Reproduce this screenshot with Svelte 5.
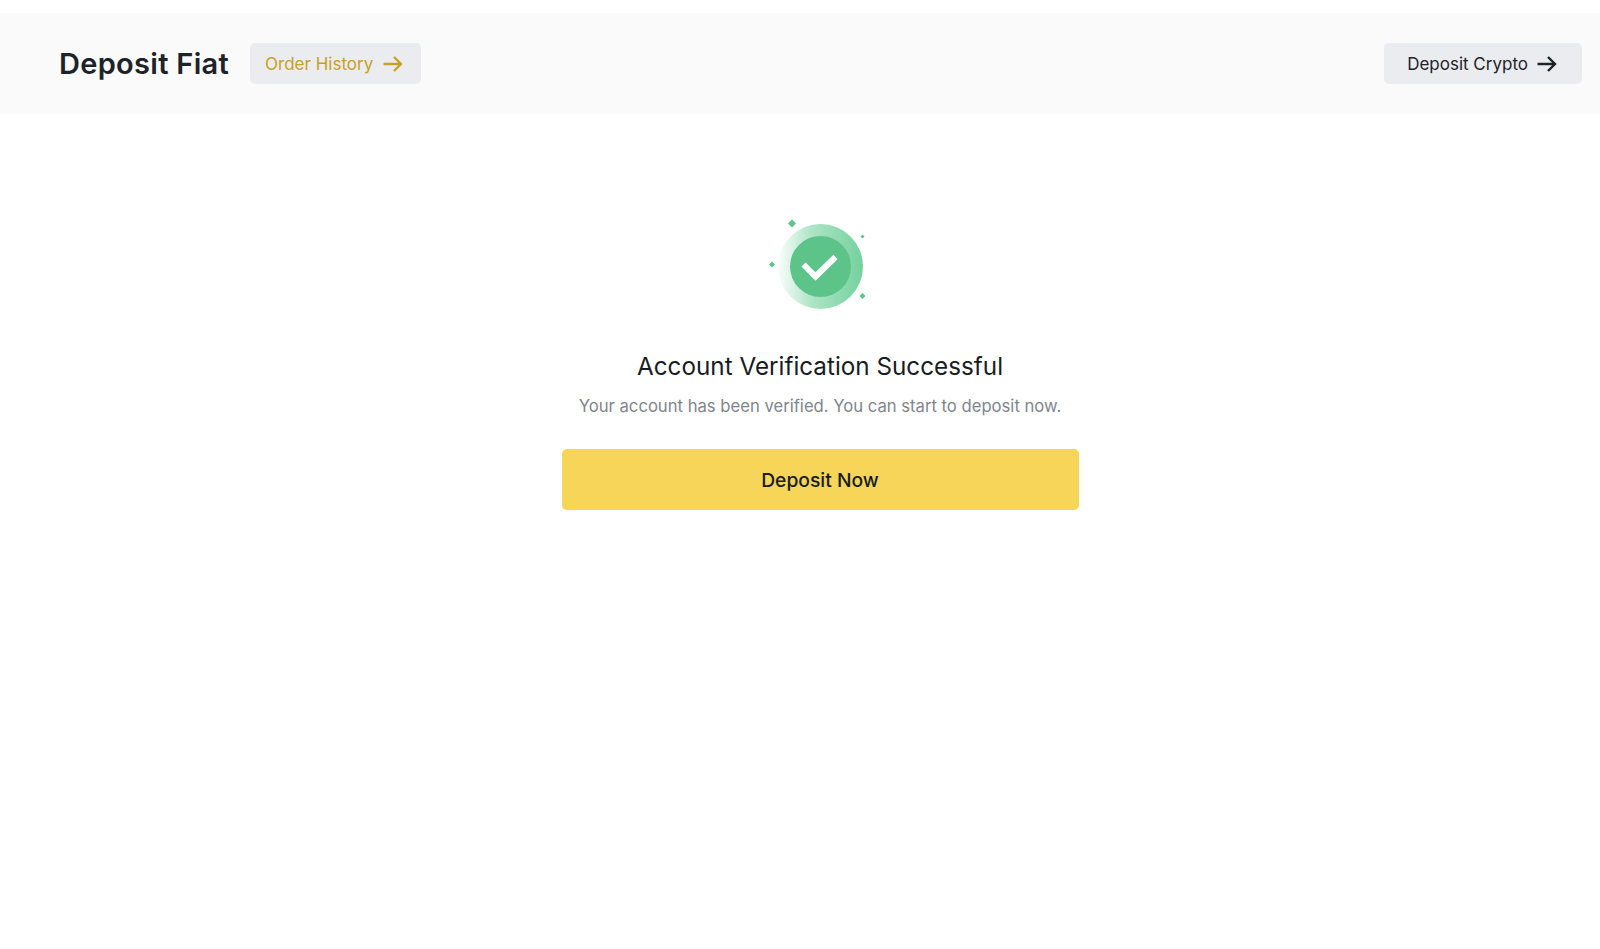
<script>
  const arrow = "M2.5 12h17M13 5l7 7-7 7";
</script>

<div class="page">
  <header class="bar">
    <div class="left">
      <h1>Deposit Fiat</h1>
      <button class="chip gold">
        <span>Order History</span>
        <svg viewBox="0 0 24 24" width="24" height="24" fill="none" stroke="currentColor" stroke-width="2.4"><path d={arrow} /></svg>
      </button>
    </div>
    <button class="chip">
      <span>Deposit Crypto</span>
      <svg viewBox="0 0 24 24" width="24" height="24" fill="none" stroke="currentColor" stroke-width="2.4"><path d={arrow} /></svg>
    </button>
  </header>

  <main class="content">
    <svg class="badge" viewBox="0 0 100 92" width="100" height="92">
      <defs>
        <linearGradient id="ring" x1="0" y1="0" x2="1" y2="0">
          <stop offset="0" stop-color="#5cc98c" stop-opacity="0.03" />
          <stop offset="0.4" stop-color="#5cc98c" stop-opacity="0.5" />
          <stop offset="1" stop-color="#5cc98c" stop-opacity="0.85" />
        </linearGradient>
      </defs>
      <circle cx="53.5" cy="47.5" r="42.5" fill="url(#ring)" />
      <circle cx="53.5" cy="47.5" r="30.5" fill="#5cc389" />
      <path d="M36.5 45.5l12 12 20-19.5" fill="none" stroke="#fff" stroke-width="6" />
      <path d="M25 0.5l4 4-4 4-4-4z" fill="#5cc389" />
      <path d="M5 42.5l3 3-3 3-3-3z" fill="#5cc389" />
      <path d="M95.5 15.5l2 2-2 2-2-2z" fill="#5cc389" />
      <path d="M95.5 74l3 3-3 3-3-3z" fill="#5cc389" />
    </svg>
    <h2>Account Verification Successful</h2>
    <p>Your account has been verified. You can start to deposit now.</p>
    <button class="primary">Deposit Now</button>
  </main>
</div>

<style>
  :global(body) {
    margin: 0;
    background: #fff;
    font-family: "Inter", "Noto Sans", "Liberation Sans", sans-serif;
  }
  .page {
    min-height: 949px;
    padding-top: 13px;
    box-sizing: border-box;
  }
  .bar {
    height: 101px;
    background: #fafafa;
    display: flex;
    align-items: center;
    justify-content: space-between;
    padding: 0 18px 0 59px;
    box-sizing: border-box;
  }
  .left {
    display: flex;
    align-items: center;
    gap: 21px;
  }
  h1 {
    margin: 0;
    font-size: 29px;
    font-weight: 600;
    color: #1e2329;
    line-height: 40px;
    letter-spacing: 0.3px;
  }
  .chip {
    height: 41px;
    border: 0;
    border-radius: 5px;
    background: #eaecef;
    color: #1e2329;
    font: 400 17px "Inter", sans-serif;
    display: flex;
    align-items: center;
    gap: 7px;
    padding: 0 23px 0 23px;
  }
  .gold {
    color: #c99f27;
    gap: 8px;
    padding: 0 16px 0 15px;
  }
  .content {
    display: flex;
    flex-direction: column;
    align-items: center;
    padding: 105px 0 0 40px;
  }
  .badge {
    display: block;
    margin-bottom: 39px;
    transform: translateX(-3px);
  }
  h2 {
    margin: 0;
    font-size: 24.25px;
    line-height: 34px;
    font-weight: 400;
    color: #181c22;
  }
  p {
    margin: 10px 0 0;
    font-size: 16.65px;
    line-height: 24px;
    color: #80858c;
  }
  .primary {
    margin-top: 31px;
    width: 517px;
    height: 61px;
    border: 0;
    border-radius: 5px;
    background: #f6d558;
    color: #181c22;
    font: 500 19.3px "Inter", sans-serif;
  }
</style>
